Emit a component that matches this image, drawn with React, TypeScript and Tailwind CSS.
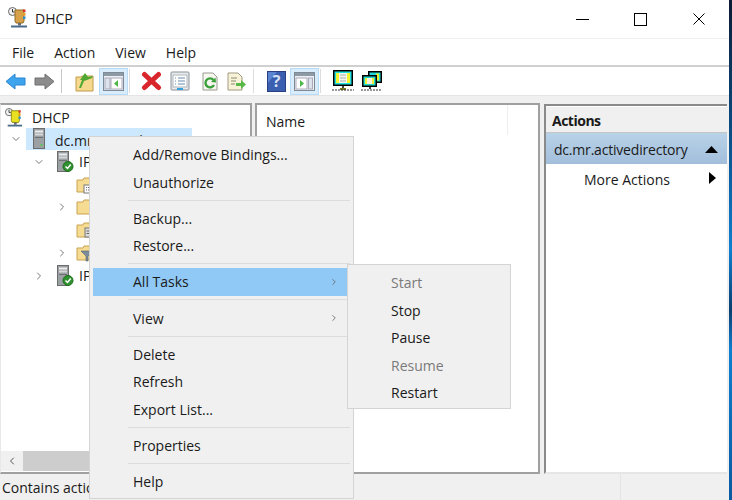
import React from "react";
import { ChevronDown, ChevronRight } from "lucide-react";

const font = { fontFamily: '"Open Sans", "Noto Sans", sans-serif' };

function Trophy({ size = 20, yellow = false }: { size?: number; yellow?: boolean }) {
  const body = yellow ? "#e8e020" : "#d8a24a";
  return (
    <svg width={size} height={size + 1} viewBox="0 0 20 21">
      <circle cx="4.5" cy="4.5" r="4" fill="#f2f2f2" stroke="#666" />
      <path d="M4.5 2v3h2" fill="none" stroke="#333" />
      <path d="M7 3h9v11l-1 2H8l-1-2z" fill={body} stroke={yellow ? "#8a8410" : "#8f6a28"} />
      <rect x="15" y="2.5" width="2.5" height="2.5" fill="#d8342c" />
      <rect x="15" y="6" width="2.5" height="2.5" fill="#e8a020" />
      <rect x="15" y="9.5" width="2.5" height="2.5" fill="#2f8fc8" />
      <rect x="10" y="16" width="3" height="2.5" fill="#6a6a6a" />
      <path d="M3 19.5h16" stroke="#4a6a8a" strokeWidth="2" />
    </svg>
  );
}

function Server({ badge = false }: { badge?: boolean }) {
  return (
    <svg width="18" height="22" viewBox="0 0 18 22">
      <rect x=".5" y=".5" width="11" height="20" fill="#9aa0a4" stroke="#6c6c6c" />
      <rect x="2" y="2.5" width="8" height="2" fill="#eeeeee" />
      <rect x="2" y="5.5" width="8" height="2" fill="#d8d8d8" />
      <rect x="2" y="9" width="8" height="1" fill="#707070" />
      {!badge && <rect x="7.5" y="16" width="2" height="2" fill="#58c858" />}
      {badge && (
        <>
          <circle cx="11" cy="15.5" r="5" fill="#2f922f" stroke="#1c6a1c" />
          <path d="M8.5 15.5l2 2 3.2-4" fill="none" stroke="#fff" strokeWidth="1.5" />
        </>
      )}
    </svg>
  );
}

function Folder({ kind }: { kind: "doc" | "plain" | "lease" | "filter" }) {
  return (
    <svg width="18" height="18" viewBox="0 0 18 18">
      <path d="M1 4h6l1-2h5l1 2h3v12H1z" fill="#f6dc92" stroke="#c9a24e" />
      {kind === "doc" && (
        <g>
          <rect x="8" y="9" width="9" height="8" fill="#fff" stroke="#777" />
          <path d="M10 11.5h5M10 14h5" stroke="#667" strokeDasharray="1 1" />
        </g>
      )}
      {kind === "lease" && (
        <g>
          <rect x="9" y="7" width="6" height="9" fill="#ddd" stroke="#777" />
          <path d="M10.5 10h3M10.5 12.5h3" stroke="#666" />
        </g>
      )}
      {kind === "filter" && <path d="M5 7h12l-5 5v5h-2v-5z" fill="#7c8c9c" stroke="#566" strokeWidth=".6" />}
    </svg>
  );
}

function Arrow({ dir, color, edge }: { dir: "l" | "r"; color: string; edge: string }) {
  return (
    <svg width="21" height="17" viewBox="0 0 21 17">
      <path
        d={dir === "l" ? "M1 8.5L10 1v4h10v7H10v4z" : "M20 8.5L11 1v4H1v7h10v4z"}
        fill={color}
        stroke={edge}
        strokeLinejoin="round"
      />
    </svg>
  );
}

function PaneIcon({ right = false }: { right?: boolean }) {
  return (
    <svg width="21" height="19" viewBox="0 0 21 19">
      <rect x=".5" y=".5" width="20" height="18" fill="#eef1f4" stroke="#7e8a96" />
      <rect x="1" y="1" width="19" height="3" fill="#8d99a5" />
      {right ? (
        <>
          <rect x="2" y="6" width="11" height="11" fill="#fff" stroke="#aab" />
          <path d="M6 8l4 3.5L6 15z" fill="#4cb848" />
          <rect x="14.5" y="6" width="4" height="11" fill="#dce3ea" stroke="#aab" />
        </>
      ) : (
        <>
          <rect x="2" y="6" width="5" height="11" fill="#dce3ea" stroke="#aab" />
          <rect x="8" y="6" width="11" height="11" fill="#fff" stroke="#aab" />
          <path d="M15 8l-4 3.5 4 3.5z" fill="#4cb848" />
        </>
      )}
    </svg>
  );
}

function Monitor() {
  return (
    <svg width="22" height="22" viewBox="0 0 22 22">
      <rect x="1" y="0" width="20" height="16" fill="#000" />
      <rect x="2.5" y="1.5" width="17" height="13" fill="#22e0e0" />
      <rect x="4" y="3" width="14" height="10" fill="#f6f6f0" />
      <rect x="4" y="3" width="3" height="10" fill="#f4f430" />
      <rect x="15" y="3" width="3" height="10" fill="#f4f430" />
      <path d="M8 5h6M8 8h6M8 11h6" stroke="#a8b0b0" />
      <rect x="10" y="16" width="2" height="2" fill="#444" />
      <rect x="8" y="18" width="6" height="2" fill="#7a7a20" />
      <path d="M0 20h22" stroke="#333" strokeDasharray="2 1" strokeWidth="1.2" />
    </svg>
  );
}

function Monitors() {
  return (
    <svg width="22" height="22" viewBox="0 0 22 22">
      <rect x="7" y="1" width="14" height="12" fill="#000" />
      <rect x="8.5" y="2.5" width="11" height="9" fill="#22d8d8" />
      <rect x="15" y="3.5" width="3" height="7" fill="#e8ec30" />
      <rect x="1" y="5" width="15" height="12" fill="#000" />
      <rect x="2.5" y="6.5" width="12" height="9" fill="#22d8c8" />
      <rect x="4" y="8" width="9" height="6" fill="#f4f4e0" />
      <rect x="4" y="8" width="2" height="6" fill="#f0f03a" />
      <rect x="11" y="8" width="2" height="6" fill="#f0f03a" />
      <rect x="8" y="17" width="2" height="2" fill="#444" />
      <path d="M0 20h20" stroke="#333" strokeDasharray="2 1" strokeWidth="1.2" />
    </svg>
  );
}

function Toolbar() {
  return (
    <div className="h-[29px] flex items-center bg-white border-b border-[#e4e4e4]">
      <div className="ml-[5px] flex"><Arrow dir="l" color="#3ea4ee" edge="#2b86cf" /></div>
      <div className="ml-[8px] flex"><Arrow dir="r" color="#8c8c8c" edge="#6e6e6e" /></div>
      <div className="ml-[6px] w-px h-[24px] bg-[#c8c8c8]" />
      <div className="ml-[13px] flex">
        <svg width="19" height="21" viewBox="0 0 19 21">
          <path d="M1 6h5l1-1h11v15H1z" fill="#f6d98c" stroke="#bf9a4a" />
          <path d="M4 17l3-8H5l5-7 3 4 5-1-1 2-5 2-3 1-3 7z" fill="#4fa832" />
        </svg>
      </div>
      <div className="ml-[5px] w-[29px] h-[27px] flex items-center justify-center bg-[#d8ecfb] border border-[#b8dcf8]"><PaneIcon /></div>
      <div className="ml-[1px] w-px h-[24px] bg-[#dcdcdc]" />
      <div className="ml-[11px] flex">
        <svg width="21" height="20" viewBox="0 0 21 20">
          <path d="M3.5 3.5l14 13M17.5 3.5l-14 13" stroke="#d8262c" strokeWidth="5" strokeLinecap="round" />
        </svg>
      </div>
      <div className="ml-[8px] flex">
        <svg width="20" height="20" viewBox="0 0 20 20">
          <rect x="1" y="1" width="18" height="18" rx="1" fill="#e8eaec" stroke="#8a929a" />
          <rect x="3" y="4" width="14" height="12" fill="#fff" stroke="#b0b6bc" />
          <path d="M5 7h1M8 7h7M5 10h1M8 10h7M5 13h1M8 13h7" stroke="#6a8ab0" />
          <rect x="7" y="17" width="6" height="2" fill="#35a0d8" />
        </svg>
      </div>
      <div className="ml-[11px] flex">
        <svg width="18" height="19" viewBox="0 0 18 19">
          <path d="M2 1h10l4 4v13H2z" fill="#f7f7f0" stroke="#9a9a90" />
          <path d="M12.5 8A4.5 4.5 0 1 0 13 13" fill="none" stroke="#3aa03a" strokeWidth="2.4" />
          <path d="M10 10l5 .5-.5-5z" fill="#3aa03a" />
        </svg>
      </div>
      <div className="ml-[8px] flex">
        <svg width="20" height="19" viewBox="0 0 20 19">
          <path d="M1 1h10l4 4v13H1z" fill="#f8f2d8" stroke="#a09a80" />
          <path d="M4 6h6M4 9h5M4 12h4" stroke="#8a8a70" />
          <path d="M9 11h5V8l5 4.5-5 4.5v-3H9z" fill="#58b848" />
        </svg>
      </div>
      <div className="ml-[6px] w-px h-[24px] bg-[#dcdcdc]" />
      <div className="ml-[13px] flex">
        <svg width="19" height="21" viewBox="0 0 19 21">
          <rect x=".5" y=".5" width="18" height="20" fill="#3a5fb0" stroke="#2a3f80" />
          <path d="M1 1h9L1 12z" fill="#5a84d0" />
          <text x="9.5" y="16" textAnchor="middle" fontSize="16" fontWeight="700" fill="#d8e0f4">?</text>
        </svg>
      </div>
      <div className="ml-[4px] w-[29px] h-[27px] flex items-center justify-center bg-[#d8ecfb] border border-[#b8dcf8]"><PaneIcon right /></div>
      <div className="ml-[1px] w-px h-[24px] bg-[#dcdcdc]" />
      <div className="ml-[11px] flex"><Monitor /></div>
      <div className="ml-[7px] flex"><Monitors /></div>
    </div>
  );
}

function TreeRow({ chevronLeft, indent, icon, label, open, gap = 4, h = "h-[22.8px]", labelClass = "" }: { chevronLeft?: number; indent: number; icon: React.ReactNode; label?: string; open?: boolean; gap?: number; h?: string; labelClass?: string }) {
  return (
    <div className={`flex items-center relative ${h}`} style={{ paddingLeft: indent }}>
      {chevronLeft !== undefined && (
        <span className="absolute flex text-[#555]" style={{ left: chevronLeft }}>
          {open ? <ChevronDown size={12} strokeWidth={1.6} /> : <ChevronRight size={12} strokeWidth={1.6} />}
        </span>
      )}
      {icon}
      {label && <span className={labelClass} style={{ marginLeft: gap }}>{label}</span>}
    </div>
  );
}

function Item({ label, sub }: { label: string; sub?: boolean }) {
  return (
    <div className="h-[27.5px] flex items-center pl-[43px] pr-[14px] justify-between">
      <span>{label}</span>
      {sub && <ChevronRight size={10} className="text-[#666]" />}
    </div>
  );
}

const Sep = () => <div className="ml-[38px] mr-[3px] my-[3.85px] h-px bg-[#dcdcdc]" />;

export default function App() {
  return (
    <div style={font} className="relative w-[732px] h-[500px] overflow-hidden bg-white text-[14px] text-[#1a1a1a] flex">
      <div className="w-[729px] h-full flex flex-col shrink-0">
        <div className="h-[38px] flex items-center border-b border-[#eeeeee] shrink-0 box-content">
          <div className="ml-[8px] -mt-[3px] flex"><Trophy size={20} /></div>
          <span className="ml-[7px] -mt-[2px]">DHCP</span>
          <div className="ml-auto flex items-center">
            <div className="w-[13px] h-px bg-black mr-[45px]" />
            <div className="w-[13px] h-[13px] border border-black mr-[46px]" />
            <svg width="12" height="12" viewBox="0 0 12 12" className="mr-[24px]"><path d="M.5.5l11 11M11.5.5l-11 11" stroke="#000" fill="none" /></svg>
          </div>
        </div>
        <div className="h-[26px] flex items-center pl-[12px] gap-[20px] border-b-2 border-[#d0d0d0] shrink-0 box-content">
          <span>File</span><span>Action</span><span>View</span><span>Help</span>
        </div>
        <Toolbar />
        <div className="flex-1 min-h-0 bg-[#f0f0f0] pt-[7px] flex">
          <div className="w-[252px] bg-white border-t-2 border-r-2 border-b-2 border-l border-[#a0a0a0] border-l-[#e8e8e8] flex flex-col min-h-0">
            <div className="flex-1 pt-[2px]">
              <TreeRow indent={4} h="h-[20.6px]" gap={9} icon={<Trophy size={18} yellow />} label="DHCP" />
              <div className="relative">
                <div className="absolute left-[25px] top-0 w-[166px] h-[22px] bg-[#cce8ff]" />
                <TreeRow chevronLeft={9} open indent={32} labelClass="pt-[2px]" icon={<Server />} label="dc.mr.activedirectory" />
              </div>
              <TreeRow chevronLeft={32} open indent={56} icon={<Server badge />} label="IPv4" />
              <TreeRow indent={75} icon={<Folder kind="doc" />} />
              <TreeRow chevronLeft={55} indent={75} icon={<Folder kind="plain" />} />
              <TreeRow indent={75} icon={<Folder kind="lease" />} />
              <TreeRow chevronLeft={55} indent={75} icon={<Folder kind="filter" />} />
              <TreeRow chevronLeft={32} indent={56} icon={<Server badge />} label="IPv6" />
            </div>
            <div className="h-[20px] flex mb-[1px]">
              <div className="w-[22px] flex items-center justify-center bg-[#f0f0f0] text-[#555]"><ChevronRight size={12} className="rotate-180" /></div>
              <div className="w-[130px] bg-[#cdcdcd]" />
              <div className="flex-1 bg-[#f0f0f0]" />
            </div>
          </div>
          <div className="ml-[3px] w-[285px] bg-white border-t-2 border-x-2 border-b-2 border-[#a0a0a0] flex flex-col">
            <div className="h-[33px] flex items-center pl-[9px] relative">
              <span>Name</span>
              <div className="absolute left-[250px] top-0 h-[30px] w-px bg-[#eeeeee]" />
            </div>
          </div>
          <div className="ml-[4px] w-[183px] mt-[1px] bg-white border-t-2 border-l-2 border-b-2 border-[#8a8a8a] border-b-[#e6e6e6] flex flex-col">
            <div className="mt-[1px] h-[23px] pt-[2px] bg-[#f0f0f0] flex items-center pl-[6px] font-bold tracking-[-0.5px] border-b-2 border-[#c4c4c4] box-content">Actions</div>
            <div className="h-[29px] mt-[-1px] pt-[2px] box-content flex items-center pl-[8px] bg-gradient-to-b from-[#b8d2e8] to-[#a2bedb]">
              <span className="tracking-[-0.2px]">dc.mr.activedirectory</span>
              <svg width="13" height="7" viewBox="0 0 13 7" className="ml-auto mr-[9px]"><path d="M6.5 0l6.5 7H0z" fill="#000" /></svg>
            </div>
            <div className="h-[30px] flex items-center pl-[38px]">
              <span>More Actions</span>
              <svg width="7" height="12" viewBox="0 0 7 12" className="ml-auto mr-[11px] -mt-[3px]"><path d="M0 0l7 6-7 6z" fill="#000" /></svg>
            </div>
          </div>
        </div>
        <div className="h-[26px] bg-[#f0f0f0] flex items-center shrink-0">
          <div className="w-[190px] pl-[2px] overflow-hidden whitespace-nowrap border-r border-[#e0e0e0]">Contains actions</div>
          <div className="ml-auto h-full border-l border-[#e4e4e4] w-[109px]" />
        </div>
      </div>
      <div className="flex-1 bg-[linear-gradient(180deg,#0c1c34_0%,#0a4a80_25%,#0e7fd0_50%,#0a3f70_62%,#0e7fd0_70%,#0a5aa0_100%)]" />

      <div className="absolute left-[89px] top-[136px] w-[265px] h-[363px] bg-[#f0f0f0] border border-[#d4d4d4] pt-[3.75px]">
        <Item label="Add/Remove Bindings..." />
        <Item label="Unauthorize" />
        <Sep />
        <Item label="Backup..." />
        <Item label="Restore..." />
        <Sep />
        <div className="ml-[3px] mr-[3px] h-[27.5px] flex items-center justify-between pl-[40px] pr-[11px] bg-[#90c8f6]">
          <span>All Tasks</span>
          <ChevronRight size={10} className="text-[#666]" />
        </div>
        <Sep />
        <Item label="View" sub />
        <Sep />
        <Item label="Delete" />
        <Item label="Refresh" />
        <Item label="Export List..." />
        <Sep />
        <Item label="Properties" />
        <Sep />
        <Item label="Help" />
      </div>
      <div className="absolute left-[347px] top-[264px] w-[164px] h-[145px] bg-[#f0f0f0] border border-[#d4d4d4] pt-[4px]">
        <div className="h-[27.5px] flex items-center pl-[43px] text-[#7a7a7a]">Start</div>
        <div className="h-[27.5px] flex items-center pl-[43px]">Stop</div>
        <div className="h-[27.5px] flex items-center pl-[43px]">Pause</div>
        <div className="h-[27.5px] flex items-center pl-[43px] text-[#7a7a7a]">Resume</div>
        <div className="h-[27.5px] flex items-center pl-[43px]">Restart</div>
      </div>
    </div>
  );
}
